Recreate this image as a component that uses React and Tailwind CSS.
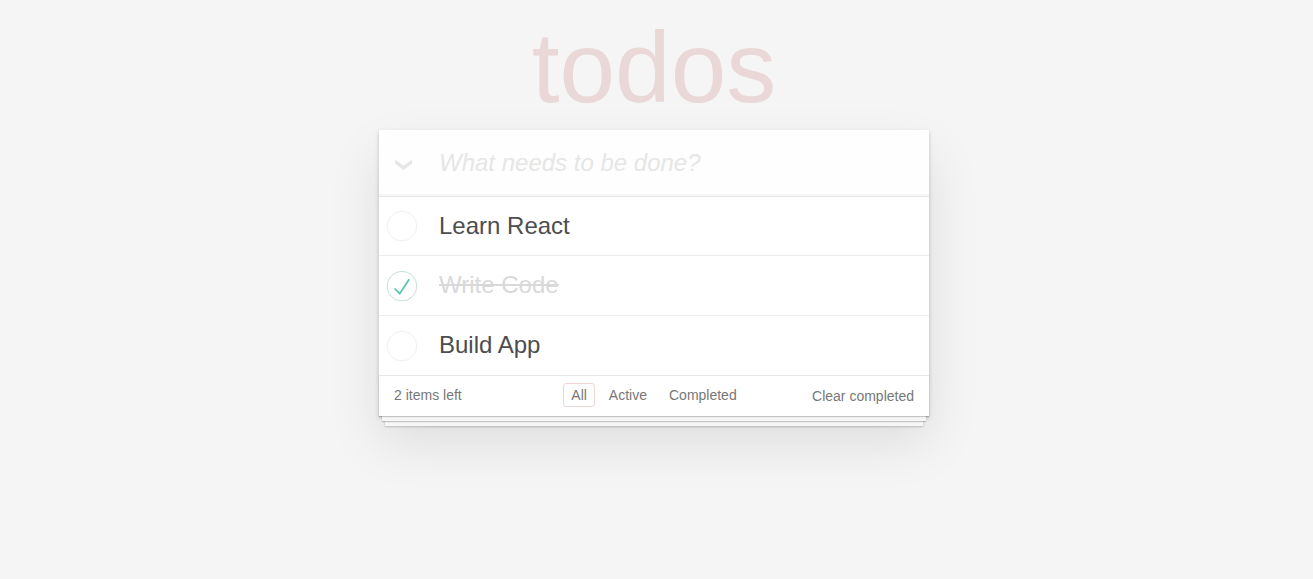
import { useState } from 'react';

const initialTodos = [
  { id: 1, title: 'Learn React', completed: false },
  { id: 2, title: 'Write Code', completed: true },
  { id: 3, title: 'Build App', completed: false },
];

const filters = ['All', 'Active', 'Completed'];

function TodoItem({ todo, onToggle }) {
  return (
    <li className="h-[60px] border-b border-[#ededed] first:h-[59px] last:h-[59px] last:border-b-0">
      <label className="relative flex h-full items-center">
        <input
          type="checkbox"
          checked={todo.completed}
          onChange={() => onToggle(todo.id)}
          className="sr-only"
        />
        <svg width="40" height="40" viewBox="-10 -18 100 135" className="shrink-0" aria-hidden="true">
          <circle cx="50" cy="50" r="50" fill="none" stroke={todo.completed ? '#bddad5' : '#ededed'} strokeWidth="3" />
          {todo.completed && <path fill="#5dc2af" d="M72 25L42 71 27 56l-4 4 20 20 34-52z" />}
        </svg>
        <span
          className={
            todo.completed
              ? 'pb-0.5 pl-5 text-2xl leading-[29px] text-[#d9d9d9] line-through'
              : 'pb-0.5 pl-5 text-2xl leading-[29px] text-[#4d4d4d]'
          }
        >
          {todo.title}
        </span>
      </label>
    </li>
  );
}

export default function App() {
  const [todos, setTodos] = useState(initialTodos);
  const [filter, setFilter] = useState('All');
  const [draft, setDraft] = useState('');

  const toggle = (id) =>
    setTodos(todos.map((t) => (t.id === id ? { ...t, completed: !t.completed } : t)));
  const remaining = todos.filter((t) => !t.completed).length;
  const toggleAll = () => setTodos(todos.map((t) => ({ ...t, completed: remaining > 0 })));
  const visible = todos.filter(
    (t) => filter === 'All' || t.completed === (filter === 'Completed'),
  );
  const add = (e) => {
    e.preventDefault();
    if (!draft.trim()) return;
    setTodos([...todos, { id: Date.now(), title: draft.trim(), completed: false }]);
    setDraft('');
  };

  return (
    <div className="min-h-screen bg-[#f5f5f5] pr-[9px] pl-1 font-['Liberation_Sans',Arial,sans-serif] text-sm text-[#4d4d4d]">
      <div className="mx-auto max-w-[550px]">
        <h1 className="pt-2 pb-1 text-center text-[100px] leading-[118px] text-[#af2f2f]/15">todos</h1>
        <main className="bg-white shadow-[0_2px_4px_0_rgba(0,0,0,0.2),0_25px_50px_0_rgba(0,0,0,0.1)]">
          <form onSubmit={add} className="flex h-[66px] items-center bg-black/[0.003] shadow-[inset_0_-2px_1px_rgba(0,0,0,0.03)]">
            <button type="button" aria-label="Mark all as complete" onClick={toggleAll} className="flex h-full w-[60px] items-center pt-1 pl-4">
              <svg width="18" height="12" viewBox="0 0 18 12" aria-hidden="true">
                <path d="M.3.8L8.6 6.7 16.9.8V4.7L8.6 11 .3 4.7Z" fill="#e6e6e6" />
              </svg>
            </button>
            <input
              type="text"
              aria-label="New todo"
              placeholder="What needs to be done?"
              value={draft}
              onChange={(e) => setDraft(e.target.value)}
              className="h-full min-w-0 flex-1 bg-transparent text-2xl outline-none placeholder:text-[#e6e6e6] placeholder:italic"
            />
          </form>
          <ul className="border-t border-[#e6e6e6]">
            {visible.map((todo) => (
              <TodoItem key={todo.id} todo={todo} onToggle={toggle} />
            ))}
          </ul>
          <footer className="grid h-[41px] grid-cols-[1fr_auto_1fr] items-center border-t border-[#e6e6e6] px-[15px] text-[#777] shadow-[0_1px_1px_rgba(0,0,0,0.2),0_8px_0_-3px_#f6f6f6,0_9px_1px_-3px_rgba(0,0,0,0.2),0_16px_0_-6px_#f6f6f6,0_17px_2px_-6px_rgba(0,0,0,0.2)]">
            <span className="pb-0.5">{remaining} items left</span>
            <nav className="flex gap-1.5 pb-0.5">
              {filters.map((name) => (
                <a
                  key={name}
                  href="#"
                  onClick={() => setFilter(name)}
                  className={
                    name === filter
                      ? 'rounded-[3px] border border-[#af2f2f]/20 px-[7px] py-px'
                      : 'rounded-[3px] border border-transparent px-[7px] py-px'
                  }
                >
                  {name}
                </a>
              ))}
            </nav>
            <button type="button" className="justify-self-end">Clear completed</button>
          </footer>
        </main>
      </div>
    </div>
  );
}
